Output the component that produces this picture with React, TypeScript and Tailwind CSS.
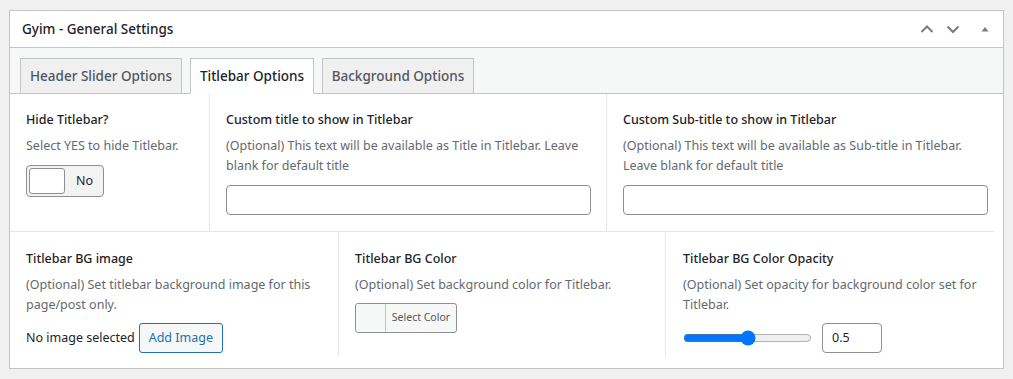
import React from "react";

const font = { fontFamily: '"Noto Sans", "Open Sans", sans-serif' };

function HeaderIcons() {
  return (
    <div className="flex items-center gap-[12px] pr-[11px] text-[#787c82]">
      <svg width="14" height="14" viewBox="0 0 14 14" fill="none" stroke="currentColor" strokeWidth="2">
        <path d="M1.5 10 L7 4.5 L12.5 10" />
      </svg>
      <svg width="14" height="14" viewBox="0 0 14 14" fill="none" stroke="currentColor" strokeWidth="2">
        <path d="M1.5 4.5 L7 10 L12.5 4.5" />
      </svg>
      <svg width="14" height="14" viewBox="0 0 14 14" fill="currentColor" className="ml-[6px]">
        <path d="M3.5 9.5 L7 5 L10.5 9.5 Z" />
      </svg>
    </div>
  );
}

function Tab({ label, active, w }: { label: string; active?: boolean; w: string }) {
  return (
    <div
      className={
        "h-[36px] -mb-px flex items-center justify-center border border-[#c3c4c7] text-[13.5px] font-medium " +
        w +
        " " +
        (active ? "bg-white border-b-white text-[#1d2327]" : "bg-[#f0f0f1] text-[#50575e]")
      }
    >
      {label}
    </div>
  );
}

function Label({ children }: { children: React.ReactNode }) {
  return <div className="text-[12.5px] leading-[20px] font-medium text-[#1d2327]">{children}</div>;
}

function Desc({ children }: { children: React.ReactNode }) {
  return <div className="mt-[6px] text-[12.5px] leading-[20px] text-[#646970]">{children}</div>;
}

export default function App() {
  return (
    <div className="w-[1013px] h-[379px] bg-[#f0f0f1] pt-[10px] pl-[9px]" style={font}>
      <div className="w-[995px] border border-[#c3c4c7] bg-white">
        <div className="h-[37px] border-b border-[#c3c4c7] flex items-center justify-between pl-[12px]">
          <div className="text-[13.5px] font-medium text-[#1d2327]">Gyim - General Settings</div>
          <HeaderIcons />
        </div>
        <div className="bg-[#f6f7f7] border-b border-[#c3c4c7] pt-[10px] pl-[10px] flex gap-[8px]">
          <Tab label="Header Slider Options" w="w-[162px]" />
          <Tab label="Titlebar Options" active w="w-[124px]" />
          <Tab label="Background Options" w="w-[152px]" />
        </div>
        <div className="flex">
          <div className="w-[200px] border-r border-[#e6e6e6] pl-[16px] pt-[16px] pb-[16px]">
            <Label>Hide Titlebar?</Label>
            <Desc>Select YES to hide Titlebar.</Desc>
            <div className="mt-[9px] w-[78px] h-[32px] rounded-[4px] border border-[#8c8f94] bg-[#f3f3f3] flex items-center pl-[2px]">
              <div className="w-[36px] h-[26px] rounded-[3px] border border-[#8c8f94] bg-white" />
              <div className="ml-[11px] text-[12.5px] text-[#1d2327]">No</div>
            </div>
          </div>
          <div className="w-[397px] border-r border-[#e6e6e6] pl-[16px] pr-[16px] pt-[16px] pb-[16px]">
            <Label>Custom title to show in Titlebar</Label>
            <Desc>(Optional) This text will be available as Title in Titlebar. Leave blank for default title</Desc>
            <div className="mt-[9px] w-[365px] h-[30px] rounded-[4px] border border-[#8c8f94] bg-white" />
          </div>
          <div className="flex-1 pl-[16px] pr-[15px] pt-[16px] pb-[16px]">
            <Label>Custom Sub-title to show in Titlebar</Label>
            <Desc>(Optional) This text will be available as Sub-title in Titlebar. Leave blank for default title</Desc>
            <div className="mt-[9px] w-[365px] h-[30px] rounded-[4px] border border-[#8c8f94] bg-white" />
          </div>
        </div>
        <div className="flex border-t border-[#e6e6e6] mr-[9px] mb-[12px]">
          <div className="w-[329px] border-r border-[#e6e6e6] pl-[16px] pr-[14px] pt-[17px] pb-[3px]">
            <Label>Titlebar BG image</Label>
            <Desc>(Optional) Set titlebar background image for this page/post only.</Desc>
            <div className="mt-[8px] flex items-center gap-[4px]">
              <span className="text-[12.5px] text-[#1d2327]">No image selected</span>
              <button className="h-[30px] w-[84px] rounded-[3px] border border-[#2271b1] bg-[#f6f7f7] text-[12.5px] text-[#2271b1]">
                Add Image
              </button>
            </div>
          </div>
          <div className="w-[327px] border-r border-[#e6e6e6] pl-[16px] pt-[17px]">
            <Label>Titlebar BG Color</Label>
            <Desc>(Optional) Set background color for Titlebar.</Desc>
            <div className="mt-[8px] w-[102px] h-[30px] rounded-[3px] border border-[#8c8f94] bg-[#f6f7f7] flex">
              <div className="w-[30px] h-full border-r border-[#c3c4c7] bg-[#f6f7f7] rounded-l-[3px]" />
              <div className="flex-1 flex items-center justify-center text-[10.5px] text-[#50575e]">Select Color</div>
            </div>
          </div>
          <div className="flex-1 pl-[17px] pr-[14px] pt-[17px]">
            <Label>Titlebar BG Color Opacity</Label>
            <Desc>(Optional) Set opacity for background color set for Titlebar.</Desc>
            <div className="mt-[8px] flex items-center">
              <input type="range" min={0} max={1} step={0.1} defaultValue={0.5} className="w-[129px] m-0" />
              <div className="ml-[10px] w-[60px] h-[30px] rounded-[4px] border border-[#8c8f94] bg-white flex items-center pl-[9px] text-[12.5px] text-[#1d2327]">
                0.5
              </div>
            </div>
          </div>
        </div>
      </div>
    </div>
  );
}
